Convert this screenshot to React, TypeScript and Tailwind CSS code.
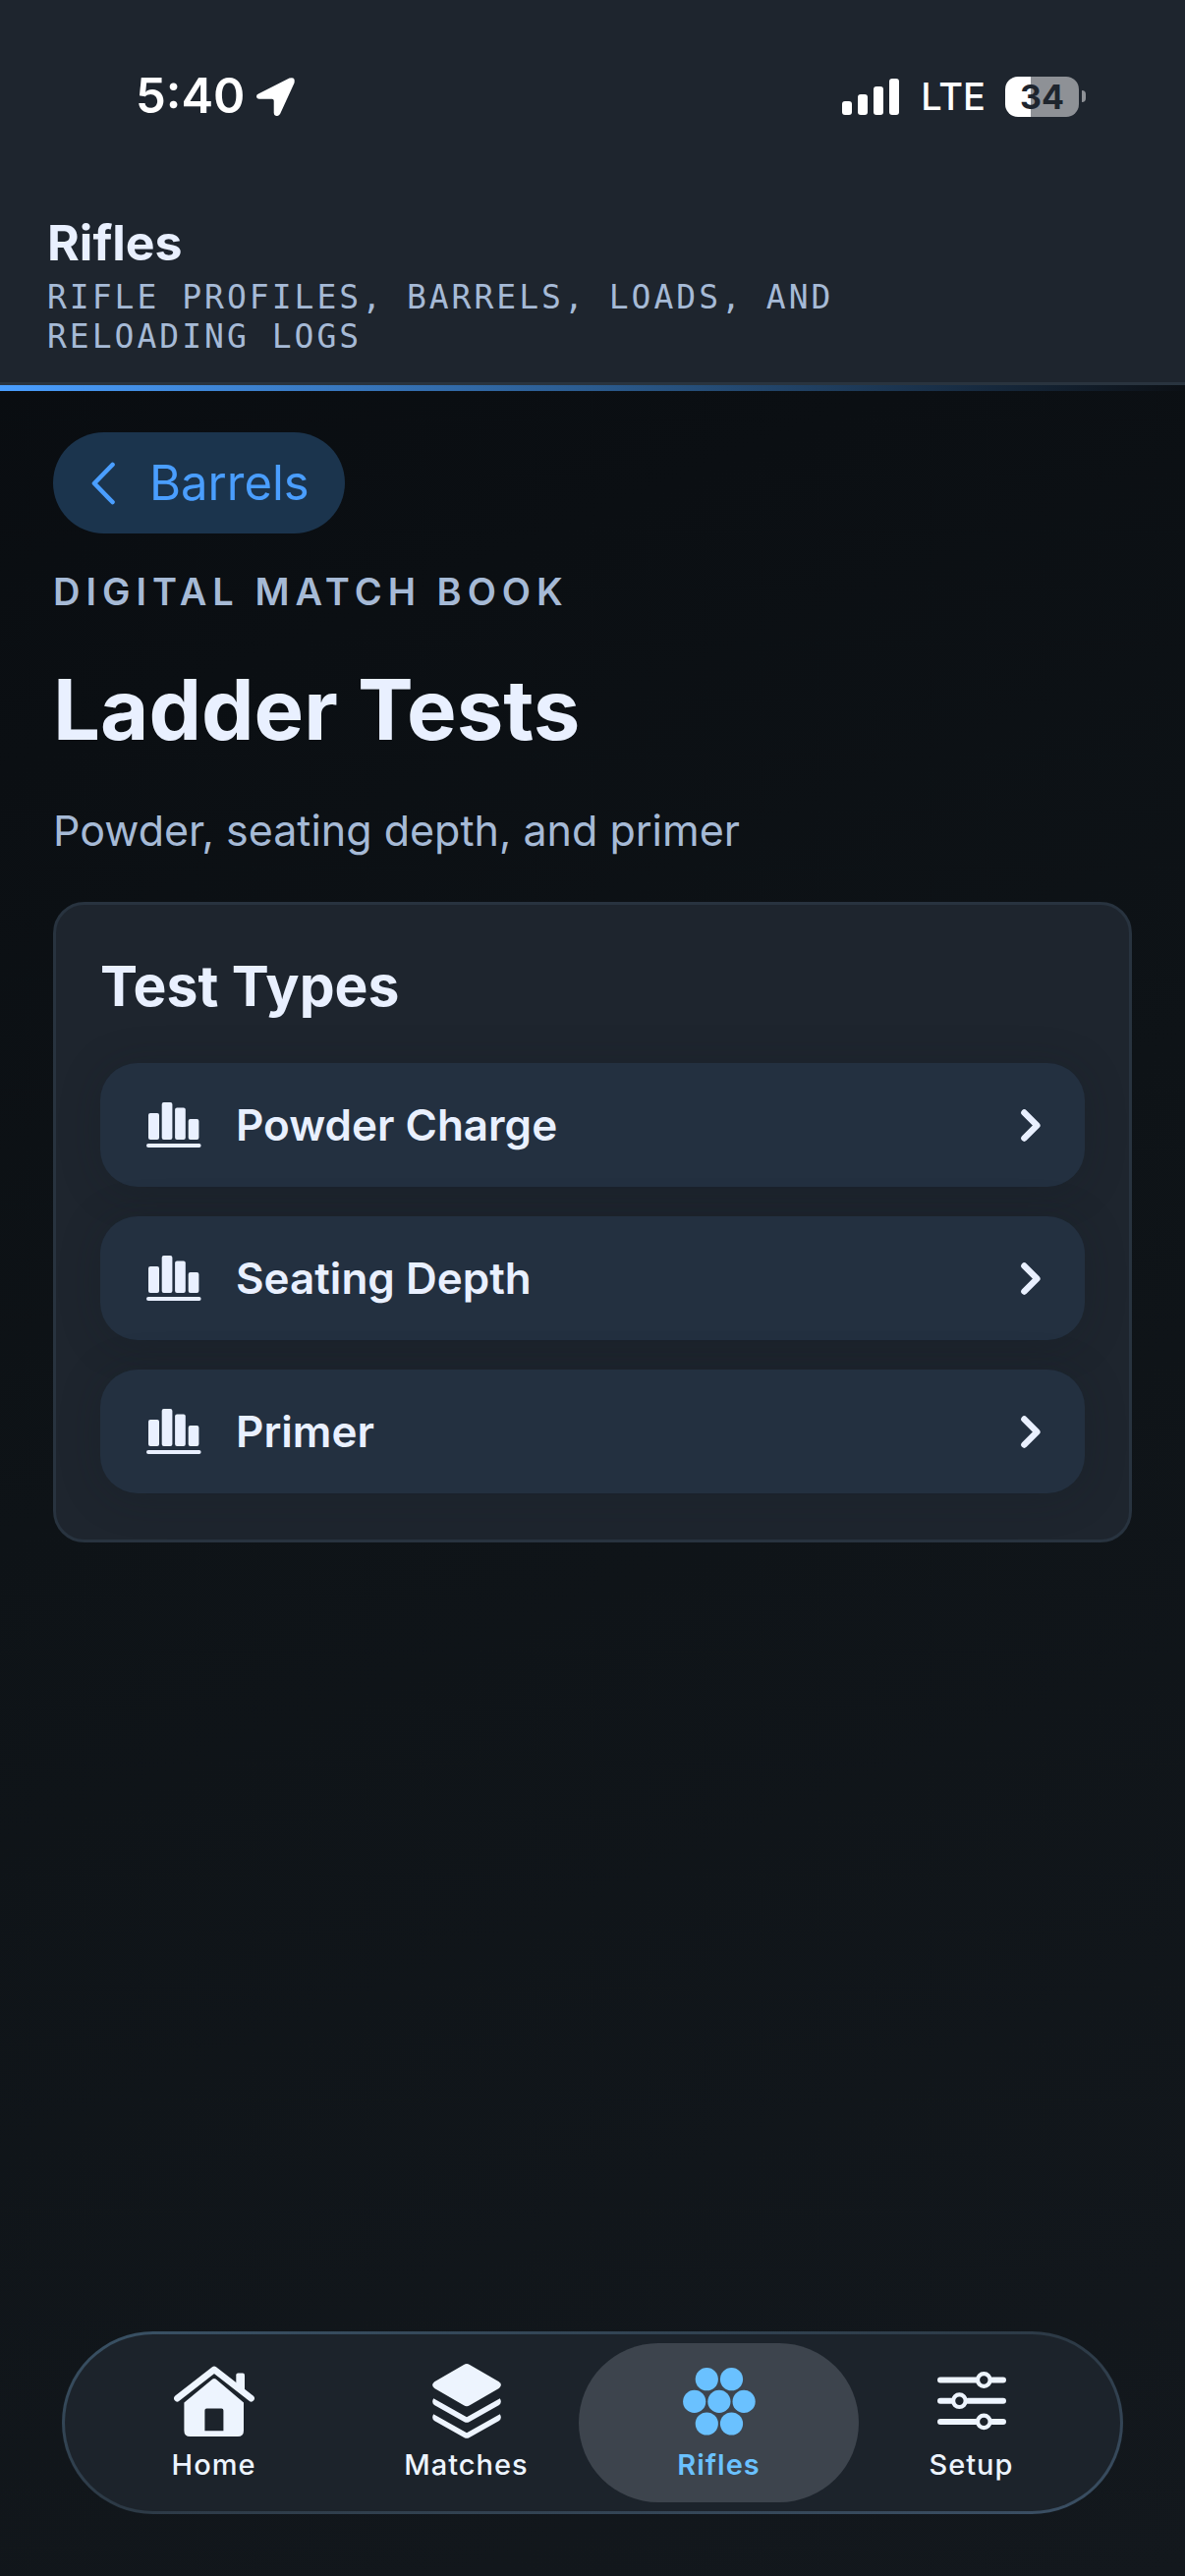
import type { ReactNode } from "react";

const testTypes = ["Powder Charge", "Seating Depth", "Primer"];

function LocationArrow() {
    return (
        <svg width="39" height="39" viewBox="0 0 39 39" fill="currentColor" aria-hidden="true">
            <path d="M2 16.6 33.5.6Q39.8-1.4 38.5 5.4L24.2 36.8Q22.8 39.4 20 39 17.7 38.4 17.7 36V23.6Q17.7 21.7 15.8 21.7H3Q0 21.4 0 18.9 0 17.6 2 16.6Z" />
        </svg>
    );
}

function SignalBars() {
    return (
        <svg width="58" height="37" viewBox="0 0 58 37" fill="currentColor" aria-hidden="true">
            <rect x="0" y="23" width="10" height="14" rx="3" />
            <rect x="16" y="16" width="10" height="21" rx="3" />
            <rect x="32" y="8" width="10" height="29" rx="3" />
            <rect x="48" y="0" width="10" height="37" rx="3" />
        </svg>
    );
}

function BarsIcon() {
    return (
        <svg width="56" height="46" viewBox="0 0 56 46" fill="currentColor" aria-hidden="true">
            <rect x="2" y="11" width="11" height="27" rx="2" />
            <rect x="15.7" y="0" width="10.7" height="38" rx="2" />
            <rect x="29.1" y="5.5" width="10.7" height="32.5" rx="2" />
            <rect x="42.7" y="17" width="10.7" height="21" rx="2" />
            <rect x="0" y="42" width="55.6" height="4" rx="2" />
        </svg>
    );
}

function HomeIcon() {
    return (
        <svg width="82" height="72" viewBox="0 0 82 72" fill="currentColor" aria-hidden="true">
            <path
                d="M3.4 33.2 41 3.8 78.6 33.2"
                fill="none"
                stroke="currentColor"
                strokeWidth="6.6"
                strokeLinecap="round"
                strokeLinejoin="round"
            />
            <path d="M63.3 19V9.5Q63.3 7.6 65.2 7.6H70Q72 7.6 72 9.5V28Z" />
            <path
                fillRule="evenodd"
                d="M39.4 13.6Q41 12.2 42.6 13.6L71 37.4V66Q71 72 65 72H16.4Q10.4 72 10.4 66V37.4ZM33.3 43.6Q31.4 43.6 31.4 45.5V66.3H50.4V45.5Q50.4 43.6 48.5 43.6Z"
            />
        </svg>
    );
}

function MatchesIcon() {
    return (
        <svg width="70" height="76" viewBox="0 0 70 76" fill="currentColor" aria-hidden="true">
            <path d="M32 1Q35-.8 38 1L67.8 18.2Q72 21.6 67.8 25L38 42.3Q35 44 32 42.3L2.2 25Q-2 21.6 2.2 18.2Z" />
            <path d="M1.2 35.2 35 54.2 68.8 35.2Q71.2 39.4 68 42L37.4 59.2Q35 60.4 32.6 59.2L2 42Q-1.2 39.4 1.2 35.2Z" />
            <path d="M1.2 51.2 35 70.2 68.8 51.2Q71.2 55.4 68 58L37.4 75.2Q35 76.4 32.6 75.2L2 58Q-1.2 55.4 1.2 51.2Z" />
        </svg>
    );
}

function RiflesIcon() {
    return (
        <svg width="74" height="69" viewBox="0 0 74 69" fill="currentColor" aria-hidden="true">
            <circle cx="24.3" cy="11.7" r="11.6" />
            <circle cx="49.5" cy="11.7" r="11.6" />
            <circle cx="11.7" cy="34.4" r="11.6" />
            <circle cx="36.9" cy="34.4" r="11.6" />
            <circle cx="62.1" cy="34.4" r="11.6" />
            <circle cx="24.3" cy="57" r="11.6" />
            <circle cx="49.5" cy="57" r="11.6" />
        </svg>
    );
}

function SetupIcon() {
    return (
        <svg width="70" height="60" viewBox="0 0 70 60" fill="none" stroke="currentColor" aria-hidden="true">
            <g strokeWidth="6" strokeLinecap="round">
                <path d="M3 8.5H39M56 8.5H67" />
                <path d="M3 29.7H14M31 29.7H67" />
                <path d="M3 50.9H39M56 50.9H67" />
            </g>
            <g strokeWidth="4.2">
                <circle cx="47.3" cy="8.5" r="6.3" />
                <circle cx="22.4" cy="29.7" r="6.3" />
                <circle cx="47.3" cy="50.9" r="6.3" />
            </g>
        </svg>
    );
}

const tabs: { label: string; icon: ReactNode; active?: boolean }[] = [
    { label: "Home", icon: <HomeIcon /> },
    { label: "Matches", icon: <MatchesIcon /> },
    { label: "Rifles", icon: <RiflesIcon />, active: true },
    { label: "Setup", icon: <SetupIcon /> },
];

function StatusBar() {
    return (
        <div className="flex h-15 items-center justify-between pl-[138px] pr-[101px] text-white">
            <div className="flex items-center gap-3">
                <span className="text-[49px] leading-[60px] font-semibold">5:40</span>
                <LocationArrow />
            </div>
            <div className="flex items-center">
                <SignalBars />
                <span className="ml-[22px] text-[38px] leading-[60px] font-medium">LTE</span>
                {/* Battery */}
                <div className="ml-5 flex h-[41px] w-[75px] items-center justify-center rounded-[13px] bg-[linear-gradient(90deg,#ffffff_26px,#8e9196_26px)] text-[34px] font-bold text-[#1e252e]">
                    34
                </div>
                <div className="ml-[3px] h-3 w-1 rounded-r-full bg-[#8e9196]"></div>
            </div>
        </div>
    );
}

export default function App() {
    return (
        <div className="flex min-h-screen flex-col bg-[linear-gradient(157deg,#080b0f,#0e1317_50%,#13181d)] font-['Inter','Liberation_Sans',sans-serif] text-[#e9f0ff]">
            {/* Header */}
            <header className="bg-[#1e252e] pt-[68px]">
                <StatusBar />
                <div className="mt-[89px] border-b-3 border-[#29343f] px-12 pb-[26px]">
                    <div className="text-[50px] leading-[60px] font-bold">Rifles</div>
                    <p className="mt-1.5 max-w-[860px] font-['DejaVu_Sans_Mono','Liberation_Mono',monospace] text-[33px] leading-10 tracking-[3px] text-[#a6bad6] uppercase">
                        Rifle profiles, barrels, loads, and reloading logs
                    </p>
                </div>
            </header>
            <div className="h-1.5 bg-[linear-gradient(90deg,#4a9eff,#2b5b8e_50%,#0c1015)]"></div>

            {/* Content */}
            <main className="flex flex-col px-[54px] pt-[42px]">
                <button
                    type="button"
                    className="flex h-[103px] items-center gap-[35px] self-start rounded-full bg-[#1b344d] pr-9 pl-[39px] text-[49px] text-[#4a9eff]">
                    <svg width="24" height="44" viewBox="0 0 24 44" fill="none" aria-hidden="true">
                        <path
                            d="M21.5 3 3 22 21.5 41"
                            stroke="currentColor"
                            strokeWidth="4.6"
                            strokeLinecap="round"
                            strokeLinejoin="round"
                        />
                    </svg>
                    Barrels
                </button>
                <p className="mt-[35px] text-[38px] leading-12 font-semibold tracking-[6px] text-[#a6bad6] uppercase">
                    Digital Match Book
                </p>
                <h1 className="mt-[47px] text-[85px] leading-[100px] font-bold">Ladder Tests</h1>
                <p className="mt-11 text-[43px] leading-14 text-[#a6bad6]">
                    Powder, seating depth, and primer
                </p>

                <section className="mt-[45px] rounded-[32px] border-3 border-[#28333f] bg-[#1e252e] px-[45px] py-[47px]">
                    <h2 className="text-[57px] leading-[72px] font-bold">Test Types</h2>
                    <div className="mt-[42px] flex flex-col gap-[30px]">
                        {testTypes.map((name) => (
                            <button
                                key={name}
                                type="button"
                                className="flex h-[126px] items-center rounded-[38px] bg-[#233040] pr-[45px] pl-[47px] text-[44px] font-semibold shadow-[0_4px_40px_rgba(20,28,34,0.25)]">
                                <BarsIcon />
                                <span className="ml-[35px] flex-1 text-left">{name}</span>
                                <svg width="20" height="33" viewBox="0 0 20 33" fill="none" aria-hidden="true">
                                    <path
                                        d="M3.4 3.4 16.4 16.5 3.4 29.6"
                                        stroke="currentColor"
                                        strokeWidth="6.4"
                                        strokeLinecap="round"
                                        strokeLinejoin="round"
                                    />
                                </svg>
                            </button>
                        ))}
                    </div>
                </section>
            </main>

            {/* Tab bar */}
            <nav className="mx-[63px] mt-auto mb-[63px] flex h-[186px] rounded-full border-3 border-transparent bg-[linear-gradient(#1c232b,#1c232b),linear-gradient(170deg,#3a5266,#2c3945_50%,#3b5065)] px-[23px] py-[9px] [background-clip:padding-box,border-box] [background-origin:border-box]">
                {tabs.map((tab) => (
                    <a
                        key={tab.label}
                        href="#"
                        aria-current={tab.active ? "page" : undefined}
                        className={
                            tab.active
                                ? "-mx-3.5 flex flex-1 basis-7 flex-col items-center rounded-full bg-[#3d444d] pt-[17px] text-[#6ac1ff]"
                                : "flex flex-1 basis-0 flex-col items-center pt-[17px] text-[#edf4fe]"
                        }>
                        <span className="flex h-[84px] items-center">{tab.icon}</span>
                        <span
                            className={
                                tab.active
                                    ? "mt-[3px] text-[29px] leading-10 font-semibold tracking-[1px]"
                                    : "mt-[3px] text-[29px] leading-10 font-medium tracking-[1px]"
                            }>
                            {tab.label}
                        </span>
                    </a>
                ))}
            </nav>
        </div>
    );
}
